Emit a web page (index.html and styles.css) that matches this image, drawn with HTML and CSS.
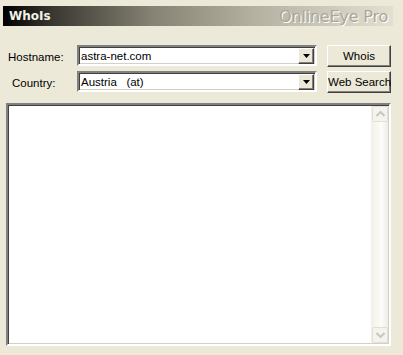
FILE: index.html
```html
<!DOCTYPE html>
<html lang="en">
<head>
  <meta charset="UTF-8">
  <title>WhoIs</title>
  <link rel="stylesheet" href="styles.css">
</head>
<body>
  <div class="window">
    <!-- title strip -->
    <div class="titlebar">
      <span class="title">WhoIs</span>
      <span class="brand">OnlineEye Pro</span>
    </div>
    <!-- lookup form -->
    <div class="form">
      <label class="lbl">Hostname:</label>
      <div class="combo">
        <span class="combo-text">astra-net.com</span>
        <span class="drop"><svg width="7" height="4" viewBox="0 0 7 4"><path d="M0 0h7L3.5 4z" fill="#000"/></svg></span>
      </div>
      <button class="btn">Whois</button>
      <label class="lbl lbl-country">Country:</label>
      <div class="combo">
        <span class="combo-text">Austria &nbsp;&nbsp;(at)</span>
        <span class="drop"><svg width="7" height="4" viewBox="0 0 7 4"><path d="M0 0h7L3.5 4z" fill="#000"/></svg></span>
      </div>
      <button class="btn">Web Search</button>
    </div>
    <!-- result box -->
    <div class="result">
      <div class="result-body"></div>
      <div class="scrollbar">
        <div class="sb-btn"><svg width="9" height="6" viewBox="0 0 9 6"><path d="M0.5 5L4.5 1L8.5 5" stroke="#c9c7ba" stroke-width="2" fill="none"/></svg></div>
        <div class="sb-track"></div>
        <div class="sb-btn"><svg width="9" height="6" viewBox="0 0 9 6"><path d="M0.5 1L4.5 5L8.5 1" stroke="#c9c7ba" stroke-width="2" fill="none"/></svg></div>
      </div>
    </div>
  </div>
</body>
</html>
```

FILE: styles.css
```css
/* XP style dialog */
body {
  margin: 0;
  background: #ece9d8;
  font-family: "Liberation Sans", Arial, sans-serif;
  font-size: 11.5px;
  color: #000;
}
.window {
  width: 403px;
  height: 355px;
  padding-top: 6px;
  box-sizing: border-box;
}
.titlebar {
  margin-left: 3px;
  width: 390px;
  height: 20px;
  background: linear-gradient(to right, #000 0%, #3a3832 13%, #858273 38%, #b5b2a2 65%, #e3e0d1 100%);
  display: flex;
  align-items: center;
  justify-content: space-between;
  padding: 0 5px 0 6px;
  box-sizing: border-box;
}
.title {
  font-family: "DejaVu Sans", Verdana, sans-serif;
  font-weight: bold;
  font-size: 12px;
  color: #f4f2e6;
}
.brand {
  font-family: "DejaVu Sans", Verdana, sans-serif;
  font-size: 16px;
  color: #a9a79a;
  text-shadow: 1px 1px 0 #fff;
  letter-spacing: -0.2px;
}
.form {
  display: grid;
  grid-template-columns: 59px 240px 64px;
  grid-auto-rows: 21px;
  column-gap: 10px;
  row-gap: 5px;
  margin: 19px 0 0 8px;
  align-items: center;
}
.lbl {
  padding-top: 2px;
}
.lbl-country {
  padding-left: 4px;
}
.combo {
  height: 21px;
  box-sizing: border-box;
  background: #fff;
  border-style: solid;
  border-width: 2px;
  border-color: #808080 #fff #fff #808080;
  box-shadow: inset 1px 1px 0 #404040, inset -1px -1px 0 #d4d0c8;
  display: flex;
  align-items: center;
  justify-content: space-between;
  padding: 0 1px 0 1px;
}
.combo-text {
  padding-left: 1px;
}
.drop {
  width: 16px;
  height: 16px;
  box-sizing: border-box;
  background: #ece9d8;
  border: 1px solid;
  border-color: #fff #404040 #404040 #fff;
  box-shadow: inset -1px -1px 0 #808080;
  display: flex;
  align-items: center;
  justify-content: center;
}
.btn {
  height: 22px;
  margin: 0;
  padding: 0;
  white-space: nowrap;
  font-family: "Liberation Sans", Arial, sans-serif;
  font-size: 11.5px;
  color: #000;
  background: #ece9d8;
  border: 1px solid;
  border-color: #fff #404040 #404040 #fff;
  box-shadow: inset -1px -1px 0 #808080;
}
.result {
  margin: 11px 0 0 6px;
  width: 385px;
  height: 243px;
  box-sizing: border-box;
  background: #fff;
  border-style: solid;
  border-width: 2px;
  border-color: #808080 #fff #fff #808080;
  box-shadow: inset 1px 1px 0 #404040, inset -1px -1px 0 #d4d0c8;
  display: flex;
  padding: 1px;
}
.result-body {
  flex: 1;
}
.scrollbar {
  width: 16px;
  display: flex;
  flex-direction: column;
  background: linear-gradient(to right, #f3f1ea, #fcfcf9 60%, #eeede5);
  border-left: 1px solid #f0efe8;
}
.sb-btn {
  height: 16px;
  box-sizing: border-box;
  border: 1px solid #e2e0d6;
  border-radius: 2px;
  background: #f4f3ee;
  display: flex;
  align-items: center;
  justify-content: center;
}
.sb-track {
  flex: 1;
}
```
